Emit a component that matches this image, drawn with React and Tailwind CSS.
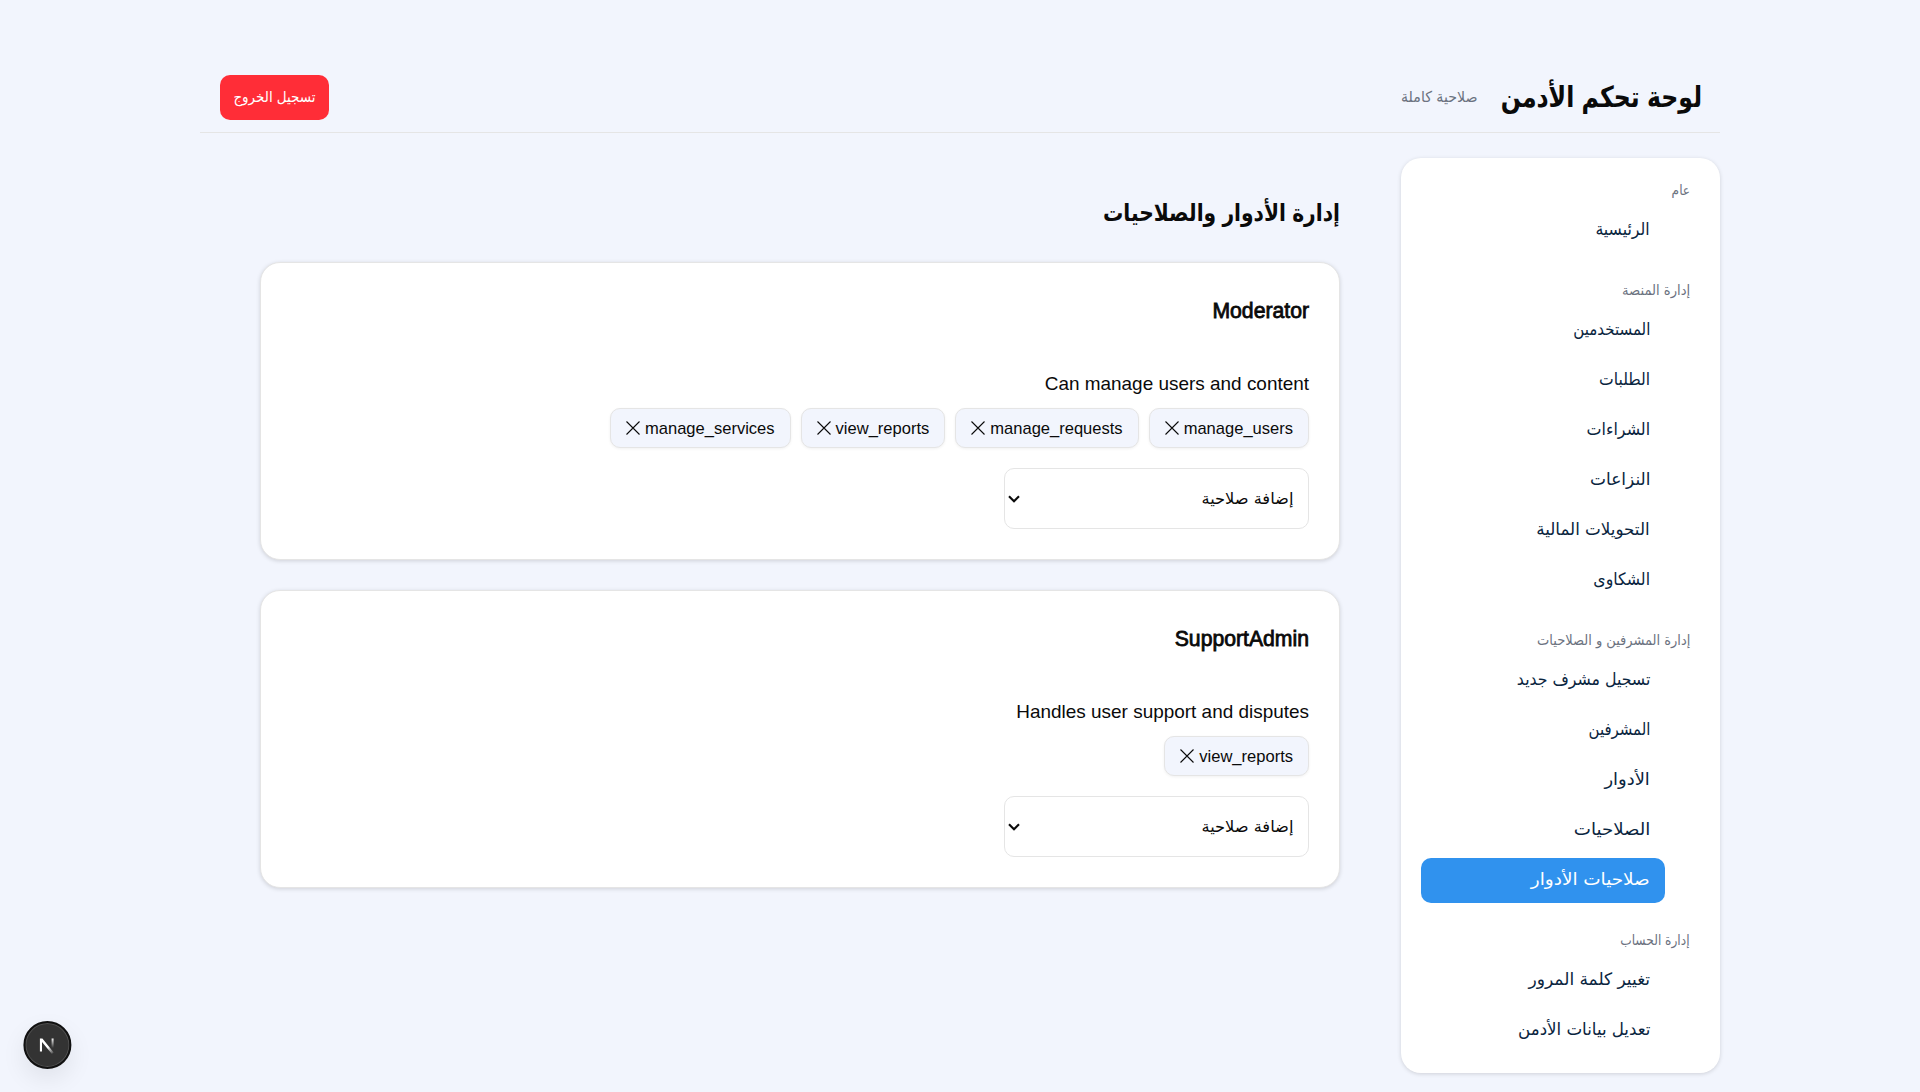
const groups = [
  { label: "عام", stretch: "scale-x-[0.97]", items: [["الرئيسية", "scale-x-[1.03]"]] },
  {
    label: "إدارة المنصة",
    stretch: "scale-x-[1.045]",
    items: [
      ["المستخدمين", "scale-x-[0.985]"],
      ["الطلبات", "scale-x-[1.02]"],
      ["الشراءات", "scale-x-[1.04]"],
      ["النزاعات", "scale-x-[1.11]"],
      ["التحويلات المالية", "scale-x-[1.095]"],
      ["الشكاوى", "scale-x-[1.03]"],
    ],
  },
  {
    label: "إدارة المشرفين و الصلاحيات",
    stretch: "scale-x-[1.033]",
    items: [
      ["تسجيل مشرف جديد", "scale-x-[1.032]"],
      ["المشرفين", "scale-x-[0.975]"],
      ["الأدوار", "scale-x-[1.17]"],
      ["الصلاحيات", "scale-x-[1.19]"],
      ["صلاحيات الأدوار", "scale-x-[1.205]", true],
    ],
  },
  {
    label: "إدارة الحساب",
    stretch: "scale-x-[0.97]",
    items: [
      ["تغيير كلمة المرور", "scale-x-[1.115]"],
      ["تعديل بيانات الأدمن", "scale-x-[1.09]"],
    ],
  },
];

const roles = [
  {
    name: "Moderator",
    description: "Can manage users and content",
    permissions: ["manage_users", "manage_requests", "view_reports", "manage_services"],
  },
  { name: "SupportAdmin", description: "Handles user support and disputes", permissions: ["view_reports"] },
];

function Sidebar() {
  return (
    <aside className="flex h-[915px] w-[319px] shrink-0 flex-col gap-[25px] rounded-[20px] bg-white p-5 shadow-[0_1px_4px_rgba(0,0,0,0.15)]">
      {groups.map((g) => (
        <div key={g.label}>
          <p className="flex h-[30px] items-start pr-2.5 text-[14px] leading-[25px] text-[#6b7280]">
            <span className={`origin-right ${g.stretch}`}>{g.label}</span>
          </p>
          <ul className="flex flex-col gap-[5px] pr-[35px]">
            {g.items.map(([text, stretch, active]) => (
              <li
                key={text}
                className={`flex h-[45px] items-center rounded-[10px] px-[15px] pb-px text-[17px] ${
                  active ? "bg-[#3092ee] text-white" : "text-[#0a2540]"
                }`}
              >
                <span className={`origin-right ${stretch}`}>{text}</span>
              </li>
            ))}
          </ul>
        </div>
      ))}
    </aside>
  );
}

function Chip({ children }) {
  return (
    <span className="flex h-10 items-center gap-[5px] rounded-[10px] border border-[#e5e5e5] bg-[#f2f5fd] px-[15px] text-[16.54px] shadow-[0_1px_3px_rgba(0,0,0,0.06)]">
      <span className="pt-[3px]">{children}</span>
      <svg className="h-[14px] w-[14px]" viewBox="0 0 14 14" fill="none" stroke="currentColor" strokeWidth="1.1">
        <path d="M.5 .5l13 13M13.5 .5l-13 13" />
      </svg>
    </span>
  );
}

function PermissionPicker() {
  return (
    <button
      type="button"
      className="mt-5 flex h-[61px] w-[305px] items-center justify-between rounded-[10px] border border-[#e5e5e5] bg-white pr-[15px] pl-[3px] text-[16px]"
    >
      <span className="origin-right scale-x-[1.13] pt-px">إضافة صلاحية</span>
      <svg className="h-[8px] w-[12px]" viewBox="0 0 12 8" fill="none" stroke="currentColor" strokeWidth="2.1">
        <path d="M1 1.3l5 5 5-5" />
      </svg>
    </button>
  );
}

function RoleCard({ role }) {
  return (
    <section className="flex h-[298px] flex-col rounded-[20px] border border-[#e5e5e5] bg-white p-[30px] shadow-[0_1px_4px_rgba(0,0,0,0.15)]">
      <h3 className="h-[76px] text-[21.2px] leading-[35px] font-normal [-webkit-text-stroke:0.8px_currentColor]">
        {role.name}
      </h3>
      <p className="h-[39px] text-[18.95px] leading-[29px]">{role.description}</p>
      <div className="flex gap-2.5">
        {role.permissions.map((p) => (
          <Chip key={p}>{p}</Chip>
        ))}
      </div>
      <PermissionPicker />
    </section>
  );
}

export default function App() {
  return (
    <div
      dir="rtl"
      className="h-[1092px] overflow-hidden bg-[#f2f5fd] px-[200px] pt-[63px] font-['Liberation_Sans','DejaVu_Sans_Condensed','DejaVu_Sans',sans-serif] text-[#0a0a0a]"
    >
      <header className="flex h-[70px] items-center justify-between border-b border-[#e5e5e5] px-[18px]">
        <div className="flex w-[301px] items-center justify-between">
          <h1 className="w-[206px] origin-right scale-x-[0.905] text-[29px] font-bold whitespace-nowrap">
            لوحة تحكم الأدمن
          </h1>
          <span className="origin-left scale-x-[1.05] text-[15px] whitespace-nowrap text-[#6b7280]">صلاحية كاملة</span>
        </div>
        <button className="ml-0.5 h-[45px] w-[109px] rounded-[10px] bg-[#ff2d37] text-[15px] text-white">
          تسجيل الخروج
        </button>
      </header>
      <div className="mt-[25px] flex">
        <Sidebar />
        <main className="mr-[61px] flex w-[1080px] flex-col gap-[30px] pt-[30px]">
          <h2 className="h-[44px] origin-right scale-x-[0.937] text-[24px] leading-[50px] font-bold">
            إدارة الأدوار والصلاحيات
          </h2>
          {roles.map((r) => (
            <RoleCard key={r.name} role={r} />
          ))}
        </main>
      </div>
      <div className="fixed bottom-[23px] left-[23px] flex size-12 translate-x-[0.4px] items-center justify-center rounded-full border-2 border-[#111] bg-[#333] shadow-[inset_0_0_0_1px_#505050,0_10px_24px_rgba(0,0,0,0.08)]">
        <svg className="h-[20px] w-[18px]" viewBox="0 0 18 20" fill="none">
          <defs>
            <linearGradient id="diag" x1="10" y1="12" x2="15.5" y2="19" gradientUnits="userSpaceOnUse">
              <stop stopColor="#fff" />
              <stop offset="1" stopColor="#fff" stopOpacity="0" />
            </linearGradient>
            <linearGradient id="stem" x1="14" y1="3" x2="14" y2="13" gradientUnits="userSpaceOnUse">
              <stop stopColor="#fff" />
              <stop offset="1" stopColor="#fff" stopOpacity="0" />
            </linearGradient>
          </defs>
          <path d="M1.5 3.5v13h2.1v-9.6l9.9 12.1 1.8-1.4L4 3.5z" fill="url(#diag)" />
          <path d="M13.2 3.5h2v10.500h-2z" fill="url(#stem)" />
        </svg>
      </div>
    </div>
  );
}
